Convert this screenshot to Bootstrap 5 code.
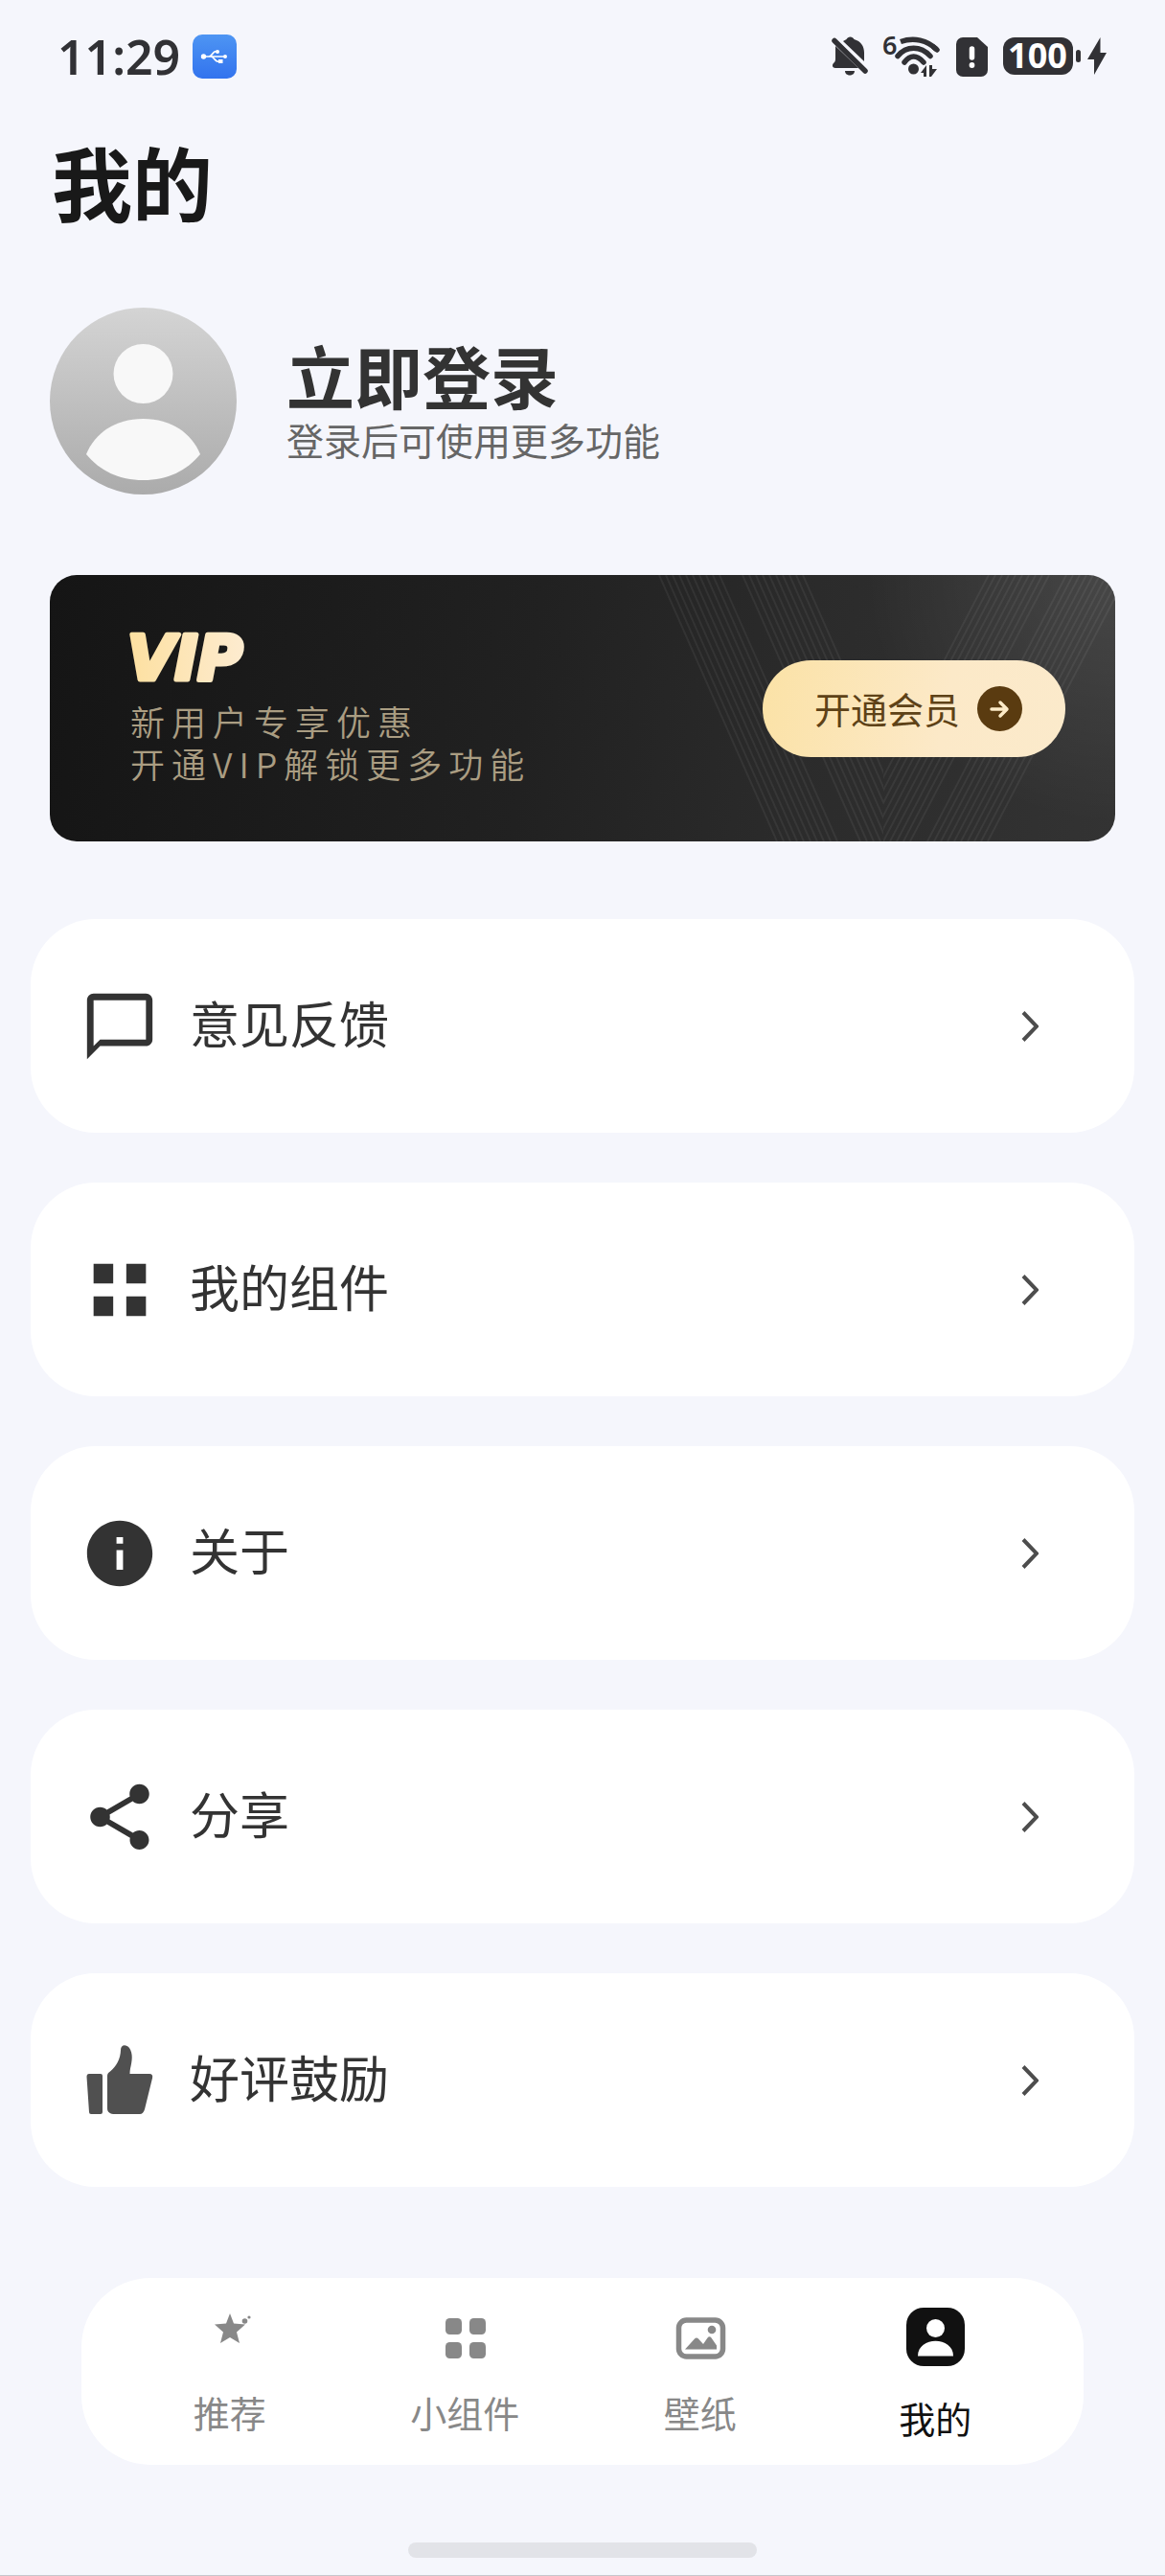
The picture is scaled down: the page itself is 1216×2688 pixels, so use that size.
<!DOCTYPE html>
<html lang="zh-CN">
<head>
<meta charset="utf-8">
<meta name="viewport" content="width=device-width, initial-scale=1">
<title>我的</title>
<link href="https://cdn.jsdelivr.net/npm/bootstrap@5.3.0/dist/css/bootstrap.min.css" rel="stylesheet">
<style>
  body { background: #f5f6fc; color: #333; font-family: "Noto Sans CJK SC", sans-serif; }
  .screen { border-bottom: 1px solid #c6c6cc; padding-bottom: 18px; }
  .status-bar { height: 118px; padding: 0 61px 0 60px; color: #313135; font-family: "Noto Sans", sans-serif; }
  .status-bar svg, .vip-logo { overflow: visible; }
  .status-left { gap: 13px; }
  .status-right { gap: 16px; }
  .clock { font-size: 50px; line-height: 60px; font-weight: 600; }
  .page-title { font-size: 84px; line-height: 98px; font-weight: 700; color: #191919; margin: 22px 54px 83px; }
  .profile { margin: 0 52px 84px; gap: 52px; color: inherit; }
  .profile-name { font-size: 71px; line-height: 78px; font-weight: 700; color: #333; }
  .profile-note { font-size: 39px; line-height: 58px; color: #666; }
  .vip-panel { height: 278px; margin: 0 52px 81px; padding: 0 52px 0 84px; border-radius: 28px;
    background: radial-gradient(circle at 100% 0, rgba(255,255,255,.1), rgba(255,255,255,0) 260px), linear-gradient(97deg, #151515, #212121 45%, #2b2b2b 70%, #333); }
  .vip-lines { inset: 0; }
  .vip-copy { margin-top: 18px; font-size: 36px; line-height: 44px; font-weight: 350; letter-spacing: 7px; color: #aa9d82; }
  .vip-btn { height: 101px; padding: 0 45px 0 54px; gap: 18px; border: 0; font-size: 38px; line-height: 44px; color: #5e4217;
    background: linear-gradient(100deg, #fbe2a6, #fce9c8 60%, #fbeacb); }
  .menu { gap: 52px; margin: 0 32px 95px; }
  .menu-row { height: 223px; padding: 0 100px 0 52px; gap: 32px; border-radius: 68px; background: #fff; color: #333; }
  .menu-label { font-size: 52px; line-height: 64px; padding-bottom: 8px; }
  .tabs { height: 195px; margin: 0 85px 81px; padding: 31px 32px 0; border-radius: 72px; }
  .tab-item { font-size: 38px; line-height: 44px; gap: 26px; color: #888; }
  .tab-item.active { gap: 32px; color: #111; }
  .home-bar { width: 364px; height: 16px; background: #e2e3e8; }
</style>
</head>
<body>
<div class="screen">
  <header class="status-bar d-flex align-items-center justify-content-between">
    <div class="status-left d-flex align-items-center">
      <span class="clock">11:29</span>
      <svg width="46" height="46" viewBox="0 0 46 46">
        <defs><linearGradient id="usb" x2="0" y2="1"><stop stop-color="#4e95f3"/><stop offset="1" stop-color="#3273ee"/></linearGradient></defs>
        <rect width="46" height="46" rx="10" fill="url(#usb)"/>
        <g fill="none" stroke="#fff" stroke-width="1.6"><path d="M11 23h24M17 23c4 0 3-5.500 8-5.500M19 23c4 0 3 5.500 9 5.500"/></g>
        <g fill="#fff"><circle cx="11.500" cy="23" r="2.700"/><circle cx="34" cy="23" r="2"/><circle cx="26" cy="18" r="2"/><rect x="27" y="26" width="4.500" height="4"/></g>
      </svg>
    </div>
    <div class="status-right d-flex align-items-center">
      <svg width="38" height="42" viewBox="0 0 38 42" fill="#313135">
        <path d="M4 10 28 33H4c-3 0-4-3-2-5 2-1.500 2-3 2-6zM12 5c1-1 2.500-1 3.500-2 1.500-3.500 6.500-3.500 8 0 7 2 10.500 7 10.500 14v9zM14 36h10c0 6-10 6-10 0z"/>
        <path d="M3 4.500 35 36" stroke="#313135" stroke-width="5.500" stroke-linecap="round"/>
      </svg>
      <svg width="60" height="44" viewBox="0 0 60 44" fill="none" stroke="#313135" stroke-width="5.500" stroke-linecap="round">
        <text x="-1" y="20" font-family="Noto Sans" font-size="27" font-weight="600" fill="#313135" stroke="none">6</text>
        <path d="M18 6.500c14-5 28-1.500 37.500 8" stroke-linecap="butt"/><path d="M53 12.500 56 15"/><path d="M15 21.500c9-11 24-11 34 0M22 28c6-8 13-8 20 0"/>
        <circle cx="31.500" cy="35" r="5.500" fill="#313135" stroke="none"/>
        <path d="M39 39l6-8v12h-3v-4zM48 31h3v4h5l-6 8h-2z" fill="#313135" stroke="none"/>
      </svg>
      <svg width="33" height="41" viewBox="0 0 33 41">
        <path d="M7 0h15l11 10v24a7 7 0 0 1-7 7H7a7 7 0 0 1-7-7V7a7 7 0 0 1 7-7z" fill="#313135"/>
        <path d="M16.500 12v9" stroke="#fff" stroke-width="5.500" stroke-linecap="round"/><circle cx="16.500" cy="29" r="2.900" fill="#fff"/>
      </svg>
      <svg width="108" height="40" viewBox="0 0 108 40" fill="#313135">
        <rect width="73" height="39" rx="12"/><rect x="76" y="13" width="5" height="13" rx="2.500"/>
        <path d="M101.500 0v16H108L95 39V23h-7z"/>
        <text x="36" y="32" text-anchor="middle" font-family="Noto Sans" font-size="36" font-weight="700" fill="#fff">100</text>
      </svg>
    </div>
  </header>

  <h1 class="page-title">我的</h1>

  <a href="#" class="profile d-flex align-items-center text-decoration-none">
    <svg width="195" height="195" viewBox="0 0 195 195">
      <defs><linearGradient id="ava" x2="0" y2="1"><stop stop-color="#d4d4d4"/><stop offset="1" stop-color="#ababab"/></linearGradient></defs>
      <circle cx="97.500" cy="97.500" r="97.500" fill="url(#ava)"/>
      <circle cx="97.500" cy="69" r="31" fill="#f8f8f8"/>
      <path d="M38 153c9-22 30-37 59.500-37s50.500 15 59.500 37c-14 17-34 27-59.500 27S52 170 38 153z" fill="#f8f8f8"/>
    </svg>
    <div>
      <div class="profile-name">立即登录</div>
      <div class="profile-note">登录后可使用更多功能</div>
    </div>
  </a>

  <section class="vip-panel position-relative overflow-hidden d-flex align-items-center justify-content-between">
    <svg class="vip-lines position-absolute w-100 h-100" viewBox="0 0 1112 278" preserveAspectRatio="xMaxYMid slice" fill="none" stroke="#fff" stroke-opacity=".06" stroke-width="2">
      <defs>
        <clipPath id="lh"><path d="M0 0h870v278H0z"/></clipPath><clipPath id="rh"><path d="M870 0h242v278H870z"/></clipPath>
      </defs>
      <g clip-path="url(#lh)"><path d="M636 0l123 278M643 0l123 278M650 0l123 278M657 0l123 278M664 0l123 278M671 0l123 278M678 0l123 278M685 0l123 278M692 0l123 278M699 0l123 278M723 0l123 278M730 0l123 278M737 0l123 278M744 0l123 278M751 0l123 278M758 0l123 278M765 0l123 278M772 0l123 278M779 0l123 278M786 0l123 278"/></g>
      <g clip-path="url(#rh)"><path d="M980 0l-145 278M987 0l-145 278M994 0l-145 278M1001 0l-145 278M1008 0l-145 278M1015 0l-145 278M1022 0l-145 278M1029 0l-145 278M1036 0l-145 278M1043 0l-145 278M1061 0l-145 278M1068 0l-145 278M1075 0l-145 278M1082 0l-145 278M1089 0l-145 278M1096 0l-145 278M1103 0l-145 278M1110 0l-145 278M1117 0l-145 278M1124 0l-145 278"/></g>
    </svg>
    <div class="position-relative">
      <svg class="vip-logo d-block" width="130" height="52" viewBox="0 0 130 52">
        <defs><linearGradient id="gold"><stop stop-color="#fde0a0"/><stop offset="1" stop-color="#fdebcf"/></linearGradient></defs>
        <text x="-3" y="49" font-family="DejaVu Sans" font-size="64" font-weight="700" font-style="oblique" fill="url(#gold)" stroke="url(#gold)" stroke-width="5" stroke-linejoin="round">VIP</text>
      </svg>
      <div class="vip-copy">新用户专享优惠<br>开通VIP解锁更多功能</div>
    </div>
    <button type="button" class="vip-btn position-relative rounded-pill d-flex align-items-center">
      开通会员
      <svg width="47" height="47" viewBox="0 0 47 47"><circle cx="23.500" cy="23.500" r="23.500" fill="#5a3b10"/><path d="M15 24h15M24 17l7 7-7 7" fill="none" stroke="#fdebc8" stroke-width="3.500" stroke-linecap="round" stroke-linejoin="round"/></svg>
    </button>
  </section>

  <nav class="menu d-flex flex-column" aria-label="功能">
    <a href="#" class="menu-row d-flex align-items-center text-decoration-none">
      <svg width="82" height="82" viewBox="0 0 24 24" fill="#333"><path d="M4 2h16c1.100 0 2 .9 2 2v12c0 1.100-.9 2-2 2H6l-4 4V4c0-1.100.9-2 2-2zm0 16l2-2h14V4H4z"/></svg>
      <span class="menu-label flex-grow-1">意见反馈</span>
      <svg width="18" height="32" viewBox="0 0 18 32" fill="none" stroke="#4d4d4d" stroke-width="4"><path d="M2 1.500 16 16 2 30.500"/></svg>
    </a>
    <a href="#" class="menu-row d-flex align-items-center text-decoration-none">
      <svg width="82" height="82" viewBox="0 0 24 24" fill="#333"><path d="M4 4h6v6H4zM14 4h6v6h-6zM4 14h6v6H4zM14 14h6v6h-6z"/></svg>
      <span class="menu-label flex-grow-1">我的组件</span>
      <svg width="18" height="32" viewBox="0 0 18 32" fill="none" stroke="#4d4d4d" stroke-width="4"><path d="M2 1.500 16 16 2 30.500"/></svg>
    </a>
    <a href="#" class="menu-row d-flex align-items-center text-decoration-none">
      <svg width="82" height="82" viewBox="0 0 24 24" fill="#333"><path d="M12 2C6.480 2 2 6.480 2 12s4.480 10 10 10 10-4.480 10-10S17.520 2 12 2zm1 15h-2v-6h2v6zm0-8h-2V7h2v2z"/></svg>
      <span class="menu-label flex-grow-1">关于</span>
      <svg width="18" height="32" viewBox="0 0 18 32" fill="none" stroke="#4d4d4d" stroke-width="4"><path d="M2 1.500 16 16 2 30.500"/></svg>
    </a>
    <a href="#" class="menu-row d-flex align-items-center text-decoration-none">
      <svg width="82" height="82" viewBox="0 0 24 24" fill="#333"><path d="M18 16.080c-.76 0-1.440.3-1.960.77L8.910 12.700c.05-.23.09-.46.09-.7s-.04-.47-.09-.7l7.050-4.110c.54.5 1.250.81 2.040.81 1.660 0 3-1.340 3-3s-1.340-3-3-3-3 1.340-3 3c0 .24.04.47.09.7L8.040 9.810C7.500 9.310 6.790 9 6 9c-1.660 0-3 1.340-3 3s1.340 3 3 3c.79 0 1.500-.31 2.040-.81l7.120 4.160c-.05.21-.08.43-.08.65 0 1.610 1.310 2.920 2.920 2.920s2.920-1.310 2.920-2.920-1.310-2.920-2.920-2.920z"/></svg>
      <span class="menu-label flex-grow-1">分享</span>
      <svg width="18" height="32" viewBox="0 0 18 32" fill="none" stroke="#4d4d4d" stroke-width="4"><path d="M2 1.500 16 16 2 30.500"/></svg>
    </a>
    <a href="#" class="menu-row d-flex align-items-center text-decoration-none">
      <svg width="82" height="82" viewBox="0 0 82 82" fill="#505050"><path d="M9 34h12q2 0 2 2v38q0 2-2 2H11q-2 0-2-2L6.500 37q0-3 2.500-3zM28 36c0-2 1-3 3-4.500C37 27 42 18 42 9c0-6 6-6 9-2 4 6 3 13 1 21.500q-.5 2.500-.5 5.500H72q4 0 3 4.500L67 71q-1.500 5-5 5H36c-5 0-8-2-8-6z"/></svg>
      <span class="menu-label flex-grow-1">好评鼓励</span>
      <svg width="18" height="32" viewBox="0 0 18 32" fill="none" stroke="#4d4d4d" stroke-width="4"><path d="M2 1.500 16 16 2 30.500"/></svg>
    </a>
  </nav>

  <nav class="tabs bg-white d-flex align-items-start" aria-label="底部导航">
    <a href="#" class="tab-item flex-fill w-25 d-flex flex-column align-items-center text-decoration-none">
      <svg width="61" height="61" viewBox="0 0 61 61" fill="#888"><path d="M31 6l4 10.500 12 1-9 8 3 11.500-10-6-10 6 3-11.500-9-8 12-1z"/><circle cx="46.500" cy="14" r="2.800"/><circle cx="51" cy="10" r="1.600"/></svg>
      <span>推荐</span>
    </a>
    <a href="#" class="tab-item flex-fill w-25 d-flex flex-column align-items-center text-decoration-none">
      <svg width="61" height="61" viewBox="0 0 61 61" fill="#888"><rect x="10" y="11" width="17" height="17" rx="4.500"/><rect x="35" y="11" width="17" height="17" rx="4.500"/><rect x="10" y="36" width="17" height="17" rx="4.500"/><rect x="35" y="36" width="17" height="17" rx="4.500"/></svg>
      <span>小组件</span>
    </a>
    <a href="#" class="tab-item flex-fill w-25 d-flex flex-column align-items-center text-decoration-none">
      <svg width="61" height="61" viewBox="0 0 61 61" fill="#888"><rect x="8.500" y="13" width="46" height="38" rx="8" fill="none" stroke="#888" stroke-width="5.500"/><circle cx="43" cy="23" r="4.300"/><path d="M15 43.500l10-11q2-2 4 0l5 5.500 4.500-6.500q2-2.500 4 0l5.500 8v4z"/></svg>
      <span>壁纸</span>
    </a>
    <a href="#" class="tab-item active flex-fill w-25 d-flex flex-column align-items-center text-decoration-none" aria-current="page">
      <svg width="61" height="61" viewBox="0 0 61 61"><rect width="61" height="61" rx="18" fill="#111"/><circle cx="30.500" cy="21.500" r="9.500" fill="#fff"/><path d="M12 50.500c0-21 37-21 37 0z" fill="#fff"/></svg>
      <span>我的</span>
    </a>
  </nav>

  <div class="home-bar rounded-pill mx-auto"></div>
</div>
<script src="https://cdn.jsdelivr.net/npm/bootstrap@5.3.0/dist/js/bootstrap.bundle.min.js"></script>
</body>
</html>
